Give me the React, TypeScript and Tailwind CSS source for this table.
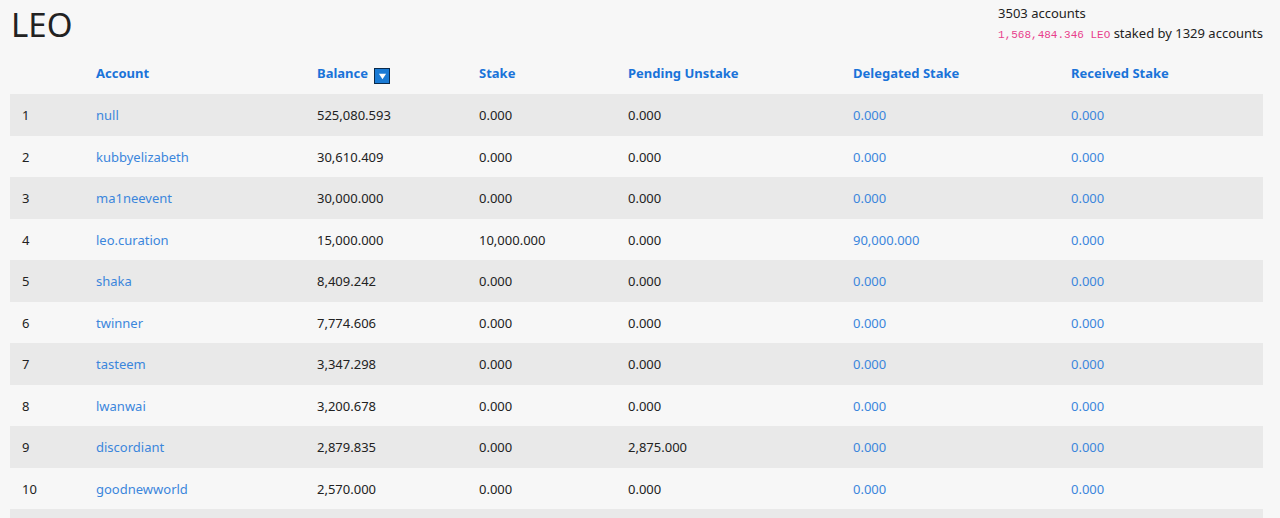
const rows = [
  { n: 1, account: "null", balance: "525,080.593", stake: "0.000", pending: "0.000", delegated: "0.000", received: "0.000" },
  { n: 2, account: "kubbyelizabeth", balance: "30,610.409", stake: "0.000", pending: "0.000", delegated: "0.000", received: "0.000" },
  { n: 3, account: "ma1neevent", balance: "30,000.000", stake: "0.000", pending: "0.000", delegated: "0.000", received: "0.000" },
  { n: 4, account: "leo.curation", balance: "15,000.000", stake: "10,000.000", pending: "0.000", delegated: "90,000.000", received: "0.000" },
  { n: 5, account: "shaka", balance: "8,409.242", stake: "0.000", pending: "0.000", delegated: "0.000", received: "0.000" },
  { n: 6, account: "twinner", balance: "7,774.606", stake: "0.000", pending: "0.000", delegated: "0.000", received: "0.000" },
  { n: 7, account: "tasteem", balance: "3,347.298", stake: "0.000", pending: "0.000", delegated: "0.000", received: "0.000" },
  { n: 8, account: "lwanwai", balance: "3,200.678", stake: "0.000", pending: "0.000", delegated: "0.000", received: "0.000" },
  { n: 9, account: "discordiant", balance: "2,879.835", stake: "0.000", pending: "2,875.000", delegated: "0.000", received: "0.000" },
  { n: 10, account: "goodnewworld", balance: "2,570.000", stake: "0.000", pending: "0.000", delegated: "0.000", received: "0.000" },
];

const SortIcon = () => (
  <span className="inline-flex items-center justify-center w-4 h-4 bg-[#1a7ad4] border border-[#0b2a4a] align-[-3px] ml-[6px]">
    <svg viewBox="0 0 10 10" className="w-[9px] h-[9px]">
      <path d="M1 2h8L5 8z" fill="#fff" />
    </svg>
  </span>
);

const headers = ["", "Account", "Balance", "Stake", "Pending Unstake", "Delegated Stake", "Received Stake"];

export default function App() {
  return (
    <div className="h-screen bg-[#f7f7f7] text-[#222] px-[10px] font-['Noto_Sans','Open_Sans',sans-serif] text-[13px] overflow-hidden">
      <div className="flex justify-between items-start pt-[3px] h-[52px]">
        <h1 className="text-[33px] leading-[44px] font-normal text-[#222] pl-[1px]">LEO</h1>
        <div className="leading-[20px] pr-[7px]">
          <div>3503 accounts</div>
          <div>
            <code className="font-['Liberation_Mono',monospace] text-[11px] text-[#e83e8c]">1,568,484.346 LEO</code>{" "}
            staked by 1329 accounts
          </div>
        </div>
      </div>
      <table className="w-[1253px] table-fixed border-collapse">
        <colgroup>
          <col className="w-[74px]" />
          <col className="w-[221px]" />
          <col className="w-[162px]" />
          <col className="w-[149px]" />
          <col className="w-[225px]" />
          <col className="w-[218px]" />
          <col className="w-[204px]" />
        </colgroup>
        <thead>
          <tr className="h-[42px]">
            {headers.map((h) => (
              <th key={h} className="text-left font-bold text-[#1a73d9] px-3 pt-[2px] pb-0 whitespace-nowrap">
                {h}
                {h === "Balance" && <SortIcon />}
              </th>
            ))}
          </tr>
        </thead>
        <tbody>
          {rows.map((r, i) => (
            <tr key={r.n} className={`h-[41.5px] ${i % 2 === 0 ? "bg-[#e9e9e9]" : ""}`}>
              <td className="px-3 pt-[2px] pb-0">{r.n}</td>
              <td className="px-3 pt-[2px] pb-0 text-[#3b86dc]">{r.account}</td>
              <td className="px-3 pt-[2px] pb-0">{r.balance}</td>
              <td className="px-3 pt-[2px] pb-0">{r.stake}</td>
              <td className="px-3 pt-[2px] pb-0">{r.pending}</td>
              <td className="px-3 pt-[2px] pb-0 text-[#3b86dc]">{r.delegated}</td>
              <td className="px-3 pt-[2px] pb-0 text-[#3b86dc]">{r.received}</td>
            </tr>
          ))}
          <tr className="h-[41.5px] bg-[#e9e9e9]">
            <td colSpan={7} />
          </tr>
        </tbody>
      </table>
    </div>
  );
}
